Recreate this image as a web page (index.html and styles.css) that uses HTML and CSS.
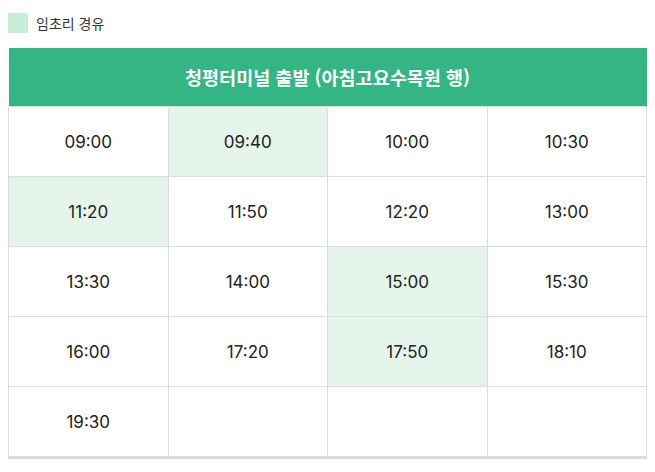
FILE: index.html
```html
<!DOCTYPE html>
<html lang="ko">
<head>
<meta charset="utf-8">
<link rel="stylesheet" href="styles.css">
</head>
<body>
<div class="legend">
  <span class="swatch"></span>
  <span class="legend-text">임초리 경유</span>
</div>
<table class="timetable">
  <thead>
    <tr><th colspan="4">청평터미널 출발 (아침고요수목원 행)</th></tr>
  </thead>
  <tbody>
    <tr><td>09:00</td><td class="via">09:40</td><td>10:00</td><td>10:30</td></tr>
    <tr><td class="via">11:20</td><td>11:50</td><td>12:20</td><td>13:00</td></tr>
    <tr><td>13:30</td><td>14:00</td><td class="via">15:00</td><td>15:30</td></tr>
    <tr><td>16:00</td><td>17:20</td><td class="via">17:50</td><td>18:10</td></tr>
    <tr class="last"><td>19:30</td><td></td><td></td><td></td></tr>
  </tbody>
</table>
</body>
</html>
```
FILE: styles.css
```css
html, body {
  margin: 0;
  padding: 0;
  background: #fff;
}
body {
  padding: 0 8px;
  font-family: Inter, "Noto Sans CJK KR", "Noto Sans", sans-serif;
  color: #222;
}
.legend {
  display: flex;
  align-items: center;
  gap: 8px;
  height: 20px;
  margin-top: 13px;
  margin-bottom: 15px;
}
.swatch {
  width: 20px;
  height: 20px;
  background: #c9eddb;
}
.legend-text {
  font-family: "Noto Sans CJK KR", sans-serif;
  font-size: 14px;
  color: #333;
}
.timetable {
  width: 639px;
  border-collapse: collapse;
  table-layout: fixed;
}
.timetable th {
  height: 58px;
  padding: 0;
  background: #34b584;
  color: #fff;
  font-family: "Noto Sans CJK KR", sans-serif;
  font-weight: 700;
  font-size: 18.5px;
  text-align: center;
}
.timetable td {
  height: 69px;
  padding: 0;
  border: 1px solid #dcdcdc;
  text-align: center;
  font-size: 17px;
  color: #222;
}
.timetable td.via {
  background: #e5f5eb;
}
.timetable tr.last td {
  border-bottom: 3px solid #dcdcdc;
}
```
